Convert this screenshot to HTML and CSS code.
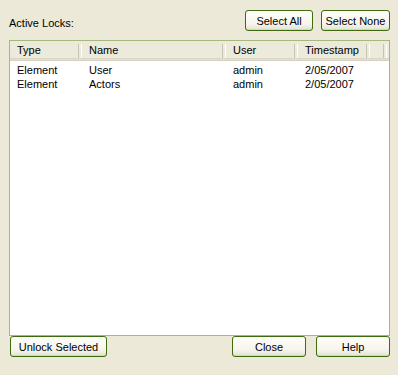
FILE: index.html
```html
<!DOCTYPE html>
<html lang="en">
<head>
  <meta charset="UTF-8">
  <meta name="viewport" content="width=device-width, initial-scale=1.0">
  <title>Active Locks</title>
  <link rel="stylesheet" href="styles.css">
</head>
<body>

  <div class="dialogo">
    <div class="barra-superior">
      <span class="etiqueta">Active Locks:</span>
      <div class="botones">
        <button class="boton ancho-all">Select All</button>
        <button class="boton ancho-none">Select None</button>
      </div>
    </div>

    <div class="lista">
      <div class="cabecera">
        <div class="col col-tipo">Type</div>
        <div class="col col-nombre">Name</div>
        <div class="col col-usuario">User</div>
        <div class="col col-fecha">Timestamp</div>
        <div class="col col-vacia"></div>
      </div>
      <div id="filas"></div>
    </div>

    <div class="barra-inferior">
      <button class="boton ancho-unlock">Unlock Selected</button>
      <div class="botones">
        <button class="boton ancho-close">Close</button>
        <button class="boton ancho-close">Help</button>
      </div>
    </div>
  </div>

  <script>
    const bloqueos = [
      { tipo: "Element", nombre: "User", usuario: "admin", fecha: "2/05/2007" },
      { tipo: "Element", nombre: "Actors", usuario: "admin", fecha: "2/05/2007" }
    ];

    let filas = document.getElementById("filas");
    bloqueos.forEach(b => {
      let fila = document.createElement("div");
      fila.className = "fila";
      fila.innerHTML = `
        <div class="col col-tipo">${b.tipo}</div>
        <div class="col col-nombre">${b.nombre}</div>
        <div class="col col-usuario">${b.usuario}</div>
        <div class="col col-fecha">${b.fecha}</div>
      `;
      filas.appendChild(fila);
    });
  </script>

</body>
</html>
```

FILE: styles.css
```css
* {
  margin: 0;
  padding: 0;
  box-sizing: border-box;
  font-family: "Liberation Sans", Arial, sans-serif;
}

body {
  background-color: #ece9d8; /* gris XP */
  color: #000;
  font-size: 11px;
  width: 398px;
  height: 375px;
  overflow: hidden;
}

.dialogo {
  display: flex;
  flex-direction: column;
  padding: 10px 8px 0 9px;
}

.barra-superior,
.barra-inferior {
  display: flex;
  align-items: center;
  justify-content: space-between;
  height: 21px;
}

.etiqueta {
  padding-top: 4px;
}

.botones {
  display: flex;
  gap: 8px;
}

.boton {
  height: 21px;
  font-size: 11px;
  font-weight: normal;
  color: #000;
  border: 1px solid #3d6b0f;
  border-radius: 3px;
  background: linear-gradient(#fefefa, #f6f4ea 70%, #e4e1d0);
  box-shadow: inset 0 -1px 0 #d8d4c0;
  cursor: pointer;
}

.ancho-all { width: 68px; }
.ancho-none { width: 69px; }
.ancho-unlock { width: 97px; margin-left: 1px; }
.ancho-close { width: 74px; }

.barra-inferior .botones {
  gap: 10px;
}

/* Lista */
.lista {
  margin-top: 9px;
  height: 296px;
  background: #fff;
  border: 1px solid #a5b97f;
}

.cabecera {
  display: flex;
  height: 20px;
  background: #ebeadb;
  border-bottom: 1px solid #d6d2c2;
  box-shadow: 0 -1px 0 #e2decd inset, 0 -2px 0 #dcd8c8 inset;
}

.cabecera .col {
  line-height: 18px;
  position: relative;
}

.cabecera .col::after {
  content: "";
  position: absolute;
  right: 0;
  top: 3px;
  height: 14px;
  width: 2px;
  border-left: 1px solid #c7c5b2;
  border-right: 1px solid #fff;
}

.cabecera .col-vacia {
  width: 17px;
}

.col {
  padding-left: 7px;
  white-space: nowrap;
  overflow: hidden;
}

.col-tipo { width: 72px; }
.col-nombre { width: 144px; }
.col-usuario { width: 72px; }
.col-fecha { width: 72px; }

#filas {
  padding-top: 2px;
}

.fila {
  display: flex;
  height: 14px;
  line-height: 14px;
}
```
